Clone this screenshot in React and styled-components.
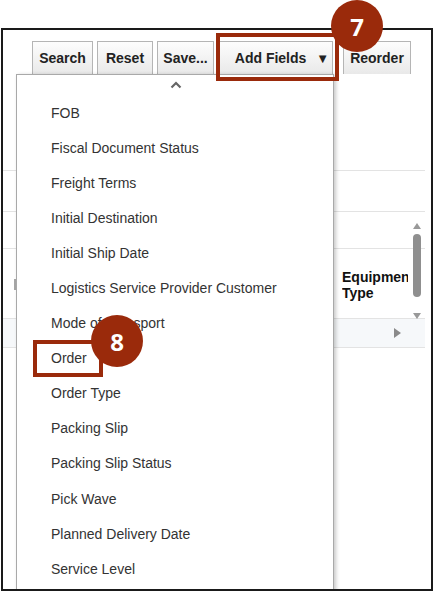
import styled, { createGlobalStyle } from "styled-components";

const GlobalStyle = createGlobalStyle`
  html, body {
    margin: 0;
    padding: 0;
    background: #fff;
    font-family: "Liberation Sans", Arial, sans-serif;
  }
  #root {
    width: 435px;
    height: 592px;
    overflow: hidden;
  }
`;

const fields = [
  "FOB",
  "Fiscal Document Status",
  "Freight Terms",
  "Initial Destination",
  "Initial Ship Date",
  "Logistics Service Provider Customer",
  "Mode of Transport",
  "Order",
  "Order Type",
  "Packing Slip",
  "Packing Slip Status",
  "Pick Wave",
  "Planned Delivery Date",
  "Service Level",
];

export default function App() {
  return (
    <Page>
      <GlobalStyle />
      <Frame>
        <Toolbar>
          <ToolButton $w={61}>Search</ToolButton>
          <ToolButton $w={56} $ml={4}>Reset</ToolButton>
          <ToolButton $w={57} $ml={4}>Save...</ToolButton>
          <ToolButton $w={114} $ml={5} $pl={12}>
            Add Fields <Arrow>▼</Arrow>
          </ToolButton>
          <ToolButton $w={68} $ml={10}>Reorder</ToolButton>
        </Toolbar>

        <Table>
          <Row $h={97} />
          <Row $h={41} />
          <Row $h={37} />
          <HeaderRow $h={70}>
            <LeftTick />
            <ColHeader>
              Equipment
              <br />
              Type
            </ColHeader>
            <Scrollbar>
              <svg width="10" height="100" viewBox="0 0 10 100">
                <path d="M1 8 L5 2 L9 8 Z" fill="#999" />
                <rect x="1" y="13" width="8" height="63" rx="4" fill="#8f8f8f" />
                <path d="M1 92 L5 98 L9 92 Z" fill="#999" />
              </svg>
            </Scrollbar>
          </HeaderRow>
          <DataRow $h={29}>
            <RightArrow>
              <svg width="8" height="10" viewBox="0 0 8 10">
                <path d="M1 0 L8 5 L1 10 Z" fill="#8a8a8a" />
              </svg>
            </RightArrow>
          </DataRow>
        </Table>

        <Dropdown>
          <Caret>
            <svg width="12" height="8" viewBox="0 0 12 8">
              <polyline points="1.5,6.5 6,2 10.5,6.5" fill="none" stroke="#666" strokeWidth="2.2" />
            </svg>
          </Caret>
          {fields.map((f) => (
            <Item key={f}>{f}</Item>
          ))}
        </Dropdown>
      </Frame>

      <Highlight $x={216} $y={33} $w={123} $h={48} />
      <Badge $x={357} $y={26}>7</Badge>
      <Highlight $x={33} $y={340} $w={70} $h={37} />
      <Badge $x={117} $y={341}>8</Badge>
    </Page>
  );
}

const Page = styled.div`
  position: relative;
  width: 435px;
  height: 592px;
  padding-top: 28px;
  box-sizing: border-box;
`;

const Frame = styled.div`
  position: relative;
  margin-left: 1px;
  width: 432px;
  height: 563px;
  border: 2px solid #1a1a1a;
  box-sizing: border-box;
  overflow: hidden;
`;

const Toolbar = styled.div`
  display: flex;
  align-items: flex-end;
  padding: 11px 0 0 29px;
  height: 44px;
  box-sizing: border-box;
`;

const ToolButton = styled.div`
  width: ${(p) => p.$w}px;
  margin-left: ${(p) => p.$ml || 0}px;
  padding-left: ${(p) => p.$pl || 0}px;
  height: 33px;
  box-sizing: border-box;
  border: 1px solid #b5b5b5;
  border-bottom: none;
  background: linear-gradient(#fdfdfd, #e9e9e9);
  display: flex;
  align-items: center;
  justify-content: center;
  font-weight: bold;
  font-size: 14px;
  color: #222;
  white-space: nowrap;
`;

const Arrow = styled.span`
  font-size: 13px;
  margin-left: 10px;
`;

const Table = styled.div`
  display: flex;
  flex-direction: column;
  width: 422px;
`;

const Row = styled.div`
  position: relative;
  height: ${(p) => p.$h}px;
  border-bottom: 1px solid #e3e3e3;
  box-sizing: border-box;
`;

const HeaderRow = styled(Row)``;

const DataRow = styled(Row)`
  background: #f6f8fa;
`;

const LeftTick = styled.div`
  position: absolute;
  left: 11px;
  top: 30px;
  width: 2px;
  height: 11px;
  background: #a8a8a8;
`;

const ColHeader = styled.div`
  position: absolute;
  left: 339px;
  top: 20px;
  width: 66px;
  overflow: hidden;
  white-space: nowrap;
  font-weight: bold;
  font-size: 14px;
  line-height: 16px;
  color: #111;
`;

const Scrollbar = styled.div`
  position: absolute;
  left: 409px;
  top: -28px;
  line-height: 0;
`;

const RightArrow = styled.div`
  position: absolute;
  left: 390px;
  top: 9px;
  line-height: 0;
`;

const Dropdown = styled.div`
  position: absolute;
  left: 13px;
  top: 44px;
  width: 318px;
  height: 540px;
  background: #fff;
  border: 1px solid #a9a9a9;
  box-sizing: border-box;
  box-shadow: 2px 1px 4px rgba(0, 0, 0, 0.22);
`;

const Caret = styled.div`
  height: 20px;
  display: flex;
  justify-content: center;
  align-items: center;
  padding-left: 2px;
  line-height: 0;
`;

const Item = styled.div`
  height: 35.1px;
  display: flex;
  align-items: center;
  padding-left: 34px;
  font-size: 14px;
  color: #333;
  white-space: nowrap;
`;

const Highlight = styled.div`
  position: absolute;
  left: ${(p) => p.$x}px;
  top: ${(p) => p.$y}px;
  width: ${(p) => p.$w}px;
  height: ${(p) => p.$h}px;
  border: 4px solid #9a2a0b;
  box-sizing: border-box;
`;

const Badge = styled.div`
  position: absolute;
  left: ${(p) => p.$x - 26}px;
  top: ${(p) => p.$y - 26}px;
  width: 52px;
  height: 52px;
  border-radius: 50%;
  background: #9a2a0b;
  color: #fff;
  display: flex;
  align-items: center;
  justify-content: center;
  font-family: "Open Sans", "Liberation Sans", sans-serif;
  font-weight: bold;
  font-size: 24px;
`;
